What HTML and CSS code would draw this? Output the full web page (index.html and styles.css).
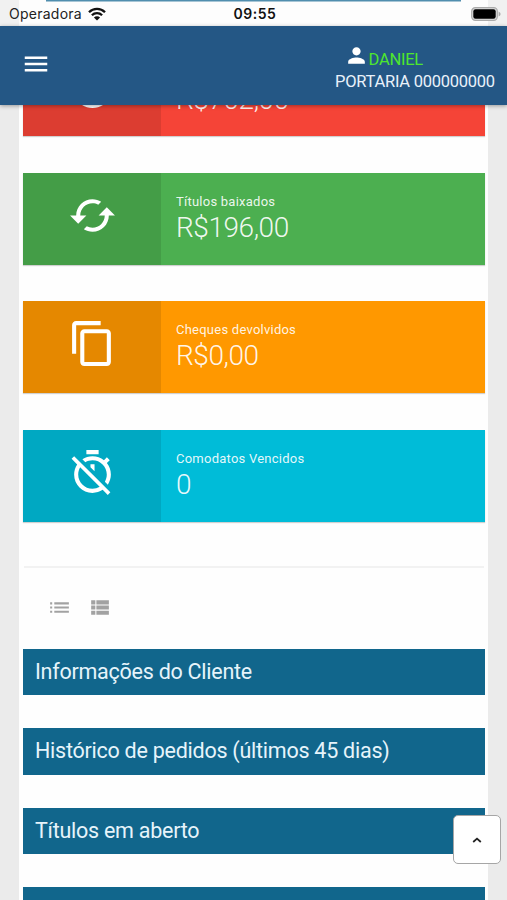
FILE: index.html
```html
<!DOCTYPE html>
<html lang="pt-BR">
<head>
<meta charset="utf-8">
<title>Cliente</title>
<link rel="stylesheet" href="styles.css">
</head>
<body>
<div class="status">
  <span class="carrier">Operadora
    <svg class="wifi" viewBox="0 0 18 14"><path d="M1 5.2a11.3 11.3 0 0 1 16 0M3.9 8.2a7.2 7.2 0 0 1 10.2 0" fill="none" stroke="#111" stroke-width="2.3"/><path d="M9 13.6 5.9 10.5a4.4 4.4 0 0 1 6.2 0z" fill="#111"/></svg>
  </span>
  <span class="clock">09:55</span>
  <svg class="battery" viewBox="0 0 30 14"><rect x=".7" y=".7" width="25.6" height="12.6" rx="3.6" fill="#ddd" stroke="#aaa" stroke-width="1.2"/><rect x="2.3" y="2.2" width="22.4" height="9.6" rx="2.2"/><path d="M27.6 4.5q2 1 2 2.5t-2 2.5z" fill="#aaa"/></svg>
</div>
<header class="topbar">
  <svg class="menu" viewBox="0 0 24 24"><path d="M3 18h18v-2H3v2zm0-5h18v-2H3v2zm0-7v2h18V6H3z"/></svg>
  <div class="user">
    <div class="user-name"><svg viewBox="0 0 24 24"><path d="M12 12c2.21 0 4-1.79 4-4s-1.79-4-4-4-4 1.79-4 4 1.79 4 4 4zm0 2c-2.67 0-8 1.34-8 4v2h16v-2c0-2.66-5.33-4-8-4z"/></svg><span>DANIEL</span></div>
    <div class="user-place">PORTARIA 000000000</div>
  </div>
</header>
<main class="panel">
  <section class="cards">
    <article class="card red">
      <div class="card-icon"><svg viewBox="0 0 24 24"><path d="M12 2C6.5 2 2 6.5 2 12s4.5 10 10 10 10-4.5 10-10S17.5 2 12 2zm0 18a8 8 0 1 1 0-16 8 8 0 0 1 0 16zm.5-13H11v6l5.2 3.2.8-1.3-4.5-2.7z"/></svg></div>
      <div class="card-body"><div class="value">R$702,00</div></div>
    </article>
    <article class="card green">
      <div class="card-icon"><svg viewBox="0 0 24 24"><path d="M19 8l-4 4h3c0 3.31-2.69 6-6 6-1.01 0-1.97-.25-2.8-.7l-1.46 1.46C8.97 19.54 10.43 20 12 20c4.42 0 8-3.58 8-8h3l-4-4zM6 12c0-3.31 2.69-6 6-6 1.01 0 1.97.25 2.8.7l1.46-1.46C15.03 4.46 13.57 4 12 4c-4.42 0-8 3.58-8 8H1l4 4 4-4H6z"/></svg></div>
      <div class="card-body"><div class="label">Títulos baixados</div><div class="value">R$196,00</div></div>
    </article>
    <article class="card orange">
      <div class="card-icon"><svg viewBox="0 0 24 24"><path d="M16 1H4c-1.1 0-2 .9-2 2v14h2V3h12V1zm3 4H8c-1.1 0-2 .9-2 2v14c0 1.1.9 2 2 2h11c1.1 0 2-.9 2-2V7c0-1.1-.9-2-2-2zm0 16H8V7h11v14z"/></svg></div>
      <div class="card-body"><div class="label">Cheques devolvidos</div><div class="value">R$0,00</div></div>
    </article>
    <article class="card cyan">
      <div class="card-icon"><svg viewBox="0 0 24 24"><path d="M19.04 4.55l-1.42 1.42C16.07 4.74 14.12 4 12 4c-1.83 0-3.53.55-4.95 1.48l1.46 1.46C9.53 6.35 10.73 6 12 6c3.87 0 7 3.13 7 7 0 1.27-.35 2.47-.94 3.49l1.45 1.45C20.45 16.53 21 14.83 21 13c0-2.12-.74-4.07-1.97-5.61l1.42-1.42-1.41-1.42zM15 1H9v2h6V1zm-4 8.44l2 2V8h-2v1.44zM3.02 4L1.75 5.27 4.5 8.03C3.55 9.45 3 11.16 3 13c0 4.97 4.02 9 9 9 1.84 0 3.55-.55 4.98-1.5l2.5 2.5 1.27-1.27-7.71-7.71L3.02 4zM12 20c-3.87 0-7-3.13-7-7 0-1.28.35-2.48.95-3.52l9.56 9.56c-1.03.61-2.23.96-3.51.96z"/></svg></div>
      <div class="card-body"><div class="label">Comodatos Vencidos</div><div class="value">0</div></div>
    </article>
  </section>
  <hr>
  <div class="views">
    <svg viewBox="0 0 24 24"><path d="M3 13h2v-2H3v2zm0 4h2v-2H3v2zm0-8h2V7H3v2zm4 4h14v-2H7v2zm0 4h14v-2H7v2zM7 7v2h14V7H7z"/></svg>
    <svg viewBox="0 0 24 24"><path d="M4 14h4v-4H4v4zm0 5h4v-4H4v4zM4 9h4V5H4v4zm5 5h12v-4H9v4zm0 5h12v-4H9v4zM9 5v4h12V5H9z"/></svg>
  </div>
  <section class="sections">
    <h2>Informações do Cliente</h2>
    <h2>Histórico de pedidos (últimos 45 dias)</h2>
    <h2>Títulos em aberto</h2>
    <h2></h2>
  </section>
</main>
<button class="to-top" aria-label="Subir"><svg viewBox="0 0 10 6"><path d="M1.2 5 5 1.6 8.8 5" fill="none" stroke="#222" stroke-width="1.8"/></svg></button>
</body>
</html>
```
FILE: styles.css
```css
* { box-sizing: border-box; }
body {
  margin: 0;
  height: 900px;
  overflow: hidden;
  position: relative;
  display: flex;
  flex-direction: column;
  background: #ebebeb;
  font-family: Roboto, "Liberation Sans", sans-serif;
}
svg { display: block; fill: currentColor; flex: none; }

.status {
  flex: none;
  height: 26px;
  padding: 1px 6px 0 9px;
  display: grid;
  grid-template-columns: 1fr auto 1fr;
  align-items: center;
  background:
    linear-gradient(#508eae, #508eae) 46px 0 / 415px 1.5px no-repeat,
    linear-gradient(#fdfdfd, #fdfdfd) 19px 0 / 469px 26px no-repeat,
    #f1f1f1;
  font-family: Inter, sans-serif;
  color: #222;
}
.carrier { display: flex; align-items: center; gap: 6px; font-size: 14px; letter-spacing: 0.25px; }
.wifi { width: 18px; height: 14px; }
.clock { font-size: 14px; font-weight: 600; letter-spacing: 0.5px; color: #111; }
.battery { width: 30px; height: 14px; justify-self: end; color: #000; }

.topbar {
  flex: none;
  height: 79px;
  padding: 0 12px 0 21.4px;
  display: flex;
  justify-content: space-between;
  position: relative;
  z-index: 1;
  background: #245785;
  box-shadow: 0 1px 4px rgba(0, 0, 0, 0.35);
  color: #fff;
}
.menu { width: 30px; height: 30px; margin-top: 22.7px; }
.user { width: 160px; padding-top: 17px; white-space: nowrap; }
.user-name { display: flex; height: 27px; padding-left: 8.5px; color: #fff; }
.user-name svg { width: 25px; height: 25px; }
.user-name span { font-size: 16.5px; line-height: 33px; letter-spacing: -0.25px; color: #4ee62e; }
.user-place { font-size: 16.5px; line-height: 23px; letter-spacing: -0.25px; color: #e9f1fa; }

.panel {
  flex: 1;
  min-height: 0;
  margin: 0 19px;
  padding: 0 3px 0 4px;
  background: #fefefe;
  overflow: hidden;
}
.cards { display: grid; gap: 36.7px; margin-top: -60.3px; }
.card {
  height: 91.7px;
  display: flex;
  color: #fff;
  box-shadow: 0 1px 1px rgba(0, 0, 0, 0.18);
}
.card-icon {
  width: 138px;
  padding-top: 18px;
  background: rgba(0, 0, 0, 0.1);
}
.card-icon svg { width: 49px; height: 49px; margin: 0 auto; }
.card-body { padding: 20px 0 0 15px; }
.label { font-size: 13px; line-height: 17px; letter-spacing: 0.24px; color: rgba(255, 255, 255, 0.9); }
.value { font-size: 28px; line-height: 35px; letter-spacing: -0.45px; font-weight: 300; color: rgba(255, 255, 255, 0.92); }
.red { background: #f54437; }
.red .card-body { padding-top: 37px; }
.green { background: #4caf50; }
.orange { background: #ff9800; }
.cyan { background: #00bcd8; }

hr { height: 2px; margin: 44px 1px 0; border: 0; background: #f2f2f2; }
.views { display: flex; gap: 15.7px; padding: 27.3px 0 0 23.7px; height: 81.4px; color: #a2a2a2; }
.views svg { width: 25px; height: 25px; }

.sections { display: grid; gap: 33px; }
h2 {
  margin: 0;
  height: 46.3px;
  padding-left: 12px;
  background: #11668c;
  color: #e6f4fb;
  font-size: 21.5px;
  font-weight: 400;
  line-height: 46.4px;
  letter-spacing: -0.25px;
}

.to-top {
  position: absolute;
  left: 453px;
  top: 815px;
  width: 48px;
  height: 49px;
  padding: 0;
  display: grid;
  place-items: center;
  border: 1px solid #a6a6a6;
  border-radius: 5px;
  background: #fff;
}
.to-top svg { width: 10px; height: 6px; }
```
